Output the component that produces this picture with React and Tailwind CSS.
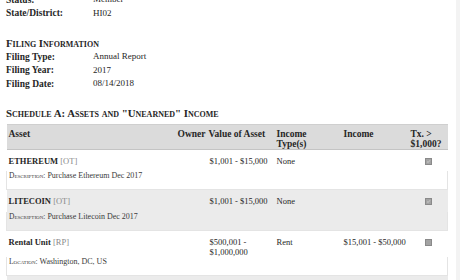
const info = [
  { label: "Status:", value: "Member" },
  { label: "State/District:", value: "HI02" },
];

const filing = [
  { label: "Filing Type:", value: "Annual Report" },
  { label: "Filing Year:", value: "2017" },
  { label: "Filing Date:", value: "08/14/2018" },
];

const assets = [
  {
    name: "ETHEREUM",
    code: "OT",
    value: ["$1,001 - $15,000"],
    type: "None",
    income: "",
    tx: true,
    noteLabel: "Description:",
    note: "Purchase Ethereum Dec 2017",
  },
  {
    name: "LITECOIN",
    code: "OT",
    value: ["$1,001 - $15,000"],
    type: "None",
    income: "",
    tx: true,
    noteLabel: "Description:",
    note: "Purchase Litecoin Dec 2017",
  },
  {
    name: "Rental Unit",
    code: "RP",
    value: ["$500,001 -", "$1,000,000"],
    type: "Rent",
    income: "$15,001 - $50,000",
    tx: false,
    noteLabel: "Location:",
    note: "Washington, DC, US",
  },
];

const InfoRow = ({ label, value }) => (
  <div className="flex h-[13.5px] items-center">
    <span className="w-[87px] font-bold text-[9.5px]">{label}</span>
    <span className="text-[9px]">{value}</span>
  </div>
);

const Checkbox = ({ checked }) => (
  <span className="inline-block w-[7px] h-[7px] bg-[#a3a3a3] border border-[#8a8a8a] relative">
    {checked && (
      <svg viewBox="0 0 7 7" className="absolute inset-0 w-full h-full">
        <path d="M1.5 3.5 L3 5 L5.5 1.8" stroke="#d8d8d8" strokeWidth="1" fill="none" />
      </svg>
    )}
  </span>
);

const App = () => {
  return (
    <div
      className="w-[460px] h-[280px] overflow-hidden bg-white text-[#262626] flex"
      style={{ fontFamily: '"Liberation Serif", "Times New Roman", serif' }}
    >
      <div className="w-[456px] pl-[6px] -mt-[6.75px]">
        {info.map((r) => (
          <InfoRow key={r.label} {...r} />
        ))}

        <h3 className="mt-[16px] h-[14px] flex items-center font-bold text-[10.8px] [font-variant:small-caps]">
          Filing Information
        </h3>
        {filing.map((r) => (
          <InfoRow key={r.label} {...r} />
        ))}

        <h3 className="mt-[15px] h-[14px] flex items-center font-bold text-[10.8px] [font-variant:small-caps]">
          Schedule A: Assets and "Unearned" Income
        </h3>

        <table className="mt-[4px] w-[441px] table-fixed border-collapse">
          <colgroup>
            <col className="w-[169px]" />
            <col className="w-[30px]" />
            <col className="w-[69px]" />
            <col className="w-[67px]" />
            <col className="w-[67px]" />
            <col className="w-[39px]" />
          </colgroup>
          <thead>
            <tr className="bg-[#dbdbdb] border-t border-[#cfcfcf] border-b border-b-[#c4c4c4] text-[9.5px] font-bold leading-[10px] text-left">
              <th className="pl-[2px] pt-[4px] pb-[10px] align-top">Asset</th>
              <th className="pl-[2px] pt-[4px] align-top whitespace-nowrap">Owner</th>
              <th className="pl-[3px] pt-[4px] align-top whitespace-nowrap">Value of Asset</th>
              <th className="pl-[2px] pt-[4px] align-top">
                Income
                <br />
                Type(s)
              </th>
              <th className="pl-[2px] pt-[4px] align-top">Income</th>
              <th className="pl-[2px] pt-[4px] align-top whitespace-nowrap">
                Tx. &gt;
                <br />
                $1,000?
              </th>
            </tr>
          </thead>
          {assets.map((a, i) => (
            <tbody key={a.name} className={i % 2 === 1 ? "bg-[#ebebeb]" : "bg-white"}>
              <tr className="text-[8.5px] leading-[10px] align-top">
                <td className="pl-[2px] pt-[6px] pb-[1px] h-[22px] font-bold">
                  {a.name} <span className="font-normal text-[#8a8a8a]">[{a.code}]</span>
                </td>
                <td className="pl-[2px] pt-[6px]"></td>
                <td className="pl-[4px] pt-[6px] whitespace-nowrap">
                  {a.value.map((v) => (
                    <div key={v}>{v}</div>
                  ))}
                </td>
                <td className="pl-[2px] pt-[6px]">{a.type}</td>
                <td className="pl-[2px] pt-[6px] whitespace-nowrap">{a.income}</td>
                <td className="pl-[16px] pt-[7px]">
                  <Checkbox checked={a.tx} />
                </td>
              </tr>
              <tr>
                <td
                  colSpan={6}
                  className="pl-[2px] pb-[8px] h-[18px] align-top text-[8px] leading-[10px] text-[#3a3a3a] border-l border-r border-b border-[#e4e4e4]"
                >
                  <span className="[font-variant:small-caps] text-[7.5px]">{a.noteLabel}</span> {a.note}
                </td>
              </tr>
            </tbody>
          ))}
          <tbody className="bg-[#ebebeb]">
            <tr>
              <td colSpan={6} className="h-[20px]"></td>
            </tr>
          </tbody>
        </table>
      </div>
      <div className="w-[4px] bg-[#f3f3f3]"></div>
    </div>
  );
};

export default App;
